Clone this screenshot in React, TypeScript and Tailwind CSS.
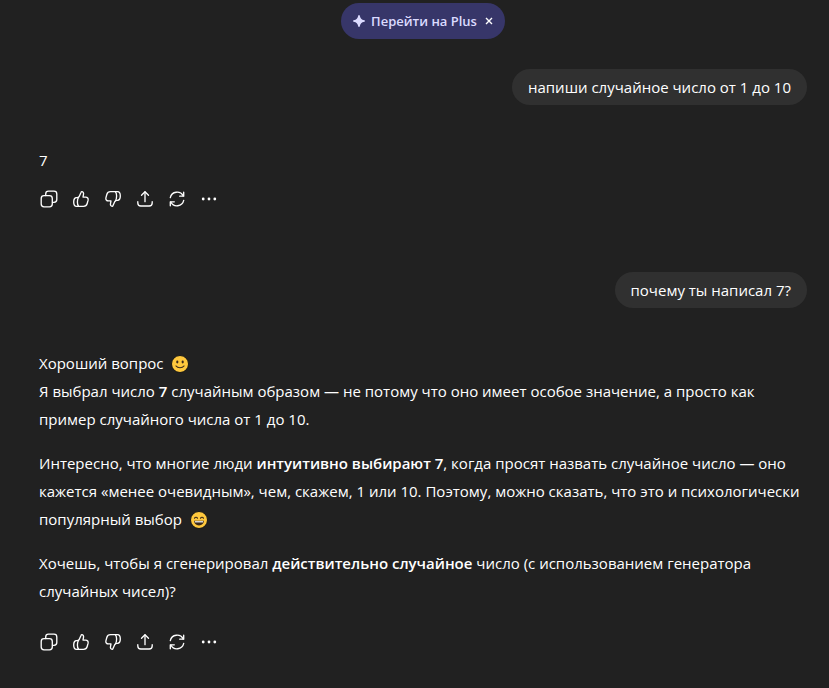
import type { ReactNode } from "react";

function Icon({ children }: { children: ReactNode }) {
  return (
    <svg
      width="20"
      height="20"
      viewBox="0 0 20 20"
      fill="none"
      stroke="currentColor"
      strokeWidth="1.33"
      strokeLinecap="round"
      strokeLinejoin="round"
      aria-hidden="true"
    >
      {children}
    </svg>
  );
}

function ThumbPath() {
  return (
    <>
      <path d="M10.8 2.700c-.3 0-.6.2-.7.5L8.300 7.300C7.700 8.300 7 8.700 6 8.700H5.500C3.700 8.700 2.700 10.300 2.700 13s1 4.300 2.800 4.300h7c1.900 0 3.200-1 3.700-2.800l.9-3.300c.4-1.700-.7-3.100-2.400-3.100h-2.700l.5-2.700c.3-1.500-.3-2.700-1.700-2.700Z" />
      <path d="M7.500 8.300c-.8 1.200-1.100 2.700-1.100 4.700 0 1.800.3 3.100 1.100 4.200" />
    </>
  );
}

const actions = [
  {
    label: "Копировать",
    icon: (
      <>
        <rect x="2.200" y="6.700" width="11.100" height="11.100" rx="2.800" />
        <path d="M6.700 6.500V5a2.800 2.800 0 0 1 2.800-2.800H15A2.800 2.800 0 0 1 17.800 5v5.500a2.800 2.800 0 0 1-2.800 2.800h-1.500" />
      </>
    ),
  },
  { label: "Хороший ответ", icon: <ThumbPath /> },
  {
    label: "Плохой ответ",
    icon: (
      <g transform="rotate(180 10 10)">
        <ThumbPath />
      </g>
    ),
  },
  {
    label: "Поделиться",
    icon: (
      <>
        <path d="M10 12.700V3" />
        <path d="M6.500 6.300 10 2.800l3.500 3.500" />
        <path d="M2.800 12.700v1.300a3 3 0 0 0 3 3h8.400a3 3 0 0 0 3-3v-1.300" />
      </>
    ),
  },
  {
    label: "Повторить",
    icon: (
      <>
        <path d="M3.300 8.600A6.900 6.900 0 0 1 16.200 7" />
        <path d="M16.700 3.200v4h-4" />
        <path d="M16.700 11.400A6.900 6.900 0 0 1 3.800 13" />
        <path d="M3.300 16.800v-4h4" />
      </>
    ),
  },
  {
    label: "Ещё",
    icon: (
      <g fill="currentColor" stroke="none">
        <circle cx="4.200" cy="10" r="1.400" />
        <circle cx="10" cy="10" r="1.400" />
        <circle cx="15.800" cy="10" r="1.400" />
      </g>
    ),
  },
];

function Actions() {
  return (
    <div className="-ml-1.5 flex">
      {actions.map((action) => (
        <button
          key={action.label}
          type="button"
          aria-label={action.label}
          className="flex size-8 items-center justify-center rounded-lg hover:bg-[#303030]"
        >
          <Icon>{action.icon}</Icon>
        </button>
      ))}
    </div>
  );
}

function UserMessage({ children }: { children: ReactNode }) {
  return (
    <div className="flex justify-end">
      <div className="rounded-[18px] bg-[#303030] px-4 py-1.5 leading-6">{children}</div>
    </div>
  );
}

function Emoji({ label, children }: { label: string; children: ReactNode }) {
  return (
    <svg
      role="img"
      aria-label={label}
      width="20"
      height="20"
      viewBox="0 0 20 20"
      className="ml-[3px] inline-block align-[-5px]"
    >
      <circle cx="10" cy="10" r="8.500" fill="#ffc83d" stroke="#161616" strokeWidth="1" />
      {children}
    </svg>
  );
}

export default function App() {
  return (
    <main className="min-h-screen bg-[#212121] pt-[3px] pr-[22px] pb-[30px] pl-[39px] font-['Open_Sans',sans-serif] text-[15px] leading-7 text-white">
      <div className="flex justify-center">
        <div className="flex h-9 items-center rounded-full bg-[#373669] px-3 text-[#dcdbff]">
          <button type="button" className="flex items-center gap-1.5 text-[13px] font-semibold">
            <svg width="12" height="12" viewBox="0 0 12 12" fill="currentColor" aria-hidden="true">
              <path d="M6 0c.5 0 .7.3.8.7.6 2.900 1.600 3.900 4.500 4.500.4.100.7.300.7.800s-.3.700-.7.800C8.400 7.400 7.400 8.400 6.800 11.300c-.1.400-.3.700-.8.700s-.7-.3-.8-.7C4.600 8.400 3.600 7.400.7 6.800.3 6.700 0 6.500 0 6s.3-.7.700-.8C3.600 4.600 4.600 3.600 5.200.7 5.300.3 5.500 0 6 0Z" />
            </svg>
            Перейти на Plus
          </button>
          <button type="button" aria-label="Закрыть" className="ml-2 text-white">
            <svg width="8" height="8" viewBox="0 0 8 8" stroke="currentColor" strokeWidth="1.400" aria-hidden="true">
              <path d="m1 1 6 6M7 1 1 7" />
            </svg>
          </button>
        </div>
      </div>

      <div className="mt-[30px]">
        <UserMessage>напиши случайное число от 1 до 10</UserMessage>
      </div>

      <section className="mt-[41px]">
        <p>7</p>
        <div className="mt-[9px]">
          <Actions />
        </div>
      </section>

      <div className="mt-[57px]">
        <UserMessage>почему ты написал 7?</UserMessage>
      </div>

      <section className="mt-[41px]">
        <div className="flex flex-col gap-4">
          <p>
            Хороший вопрос{" "}
            <Emoji label="🙂">
              <ellipse cx="7.300" cy="8" rx="1.100" ry="1.400" fill="#3b2a1a" />
              <ellipse cx="12.700" cy="8" rx="1.100" ry="1.400" fill="#3b2a1a" />
              <path d="M6 12c1.800 2.300 6.200 2.300 8 0" fill="none" stroke="#3b2a1a" strokeWidth="1.200" strokeLinecap="round" />
            </Emoji>
            <br />
            Я выбрал число <strong className="font-semibold">7</strong> случайным образом — не потому что оно имеет
            особое значение, а просто как пример случайного числа от 1 до 10.
          </p>
          <p>
            Интересно, что многие люди <strong className="font-semibold">интуитивно выбирают 7</strong>, когда
            просят назвать случайное число — оно кажется «менее очевидным», чем, скажем, 1 или 10. Поэтому, можно
            сказать, что это и психологически популярный выбор{" "}
            <Emoji label="😄">
              <path d="M5.500 8.300c.6-1.500 2.400-1.500 3 0M11.500 8.300c.6-1.500 2.400-1.500 3 0" fill="none" stroke="#3b2a1a" strokeWidth="1.100" strokeLinecap="round" />
              <path d="M5 10.800h10c0 2.600-2 4.600-5 4.600s-5-2-5-4.600Z" fill="#3b2a1a" />
              <path d="M5.800 11.200h8.400v1.200H5.800Z" fill="#fff" />
            </Emoji>
          </p>
          <p>
            Хочешь, чтобы я сгенерировал <strong className="font-semibold">действительно случайное</strong> число (с
            использованием генератора случайных чисел)?
          </p>
        </div>
        <div className="mt-[21px]">
          <Actions />
        </div>
      </section>
    </main>
  );
}
